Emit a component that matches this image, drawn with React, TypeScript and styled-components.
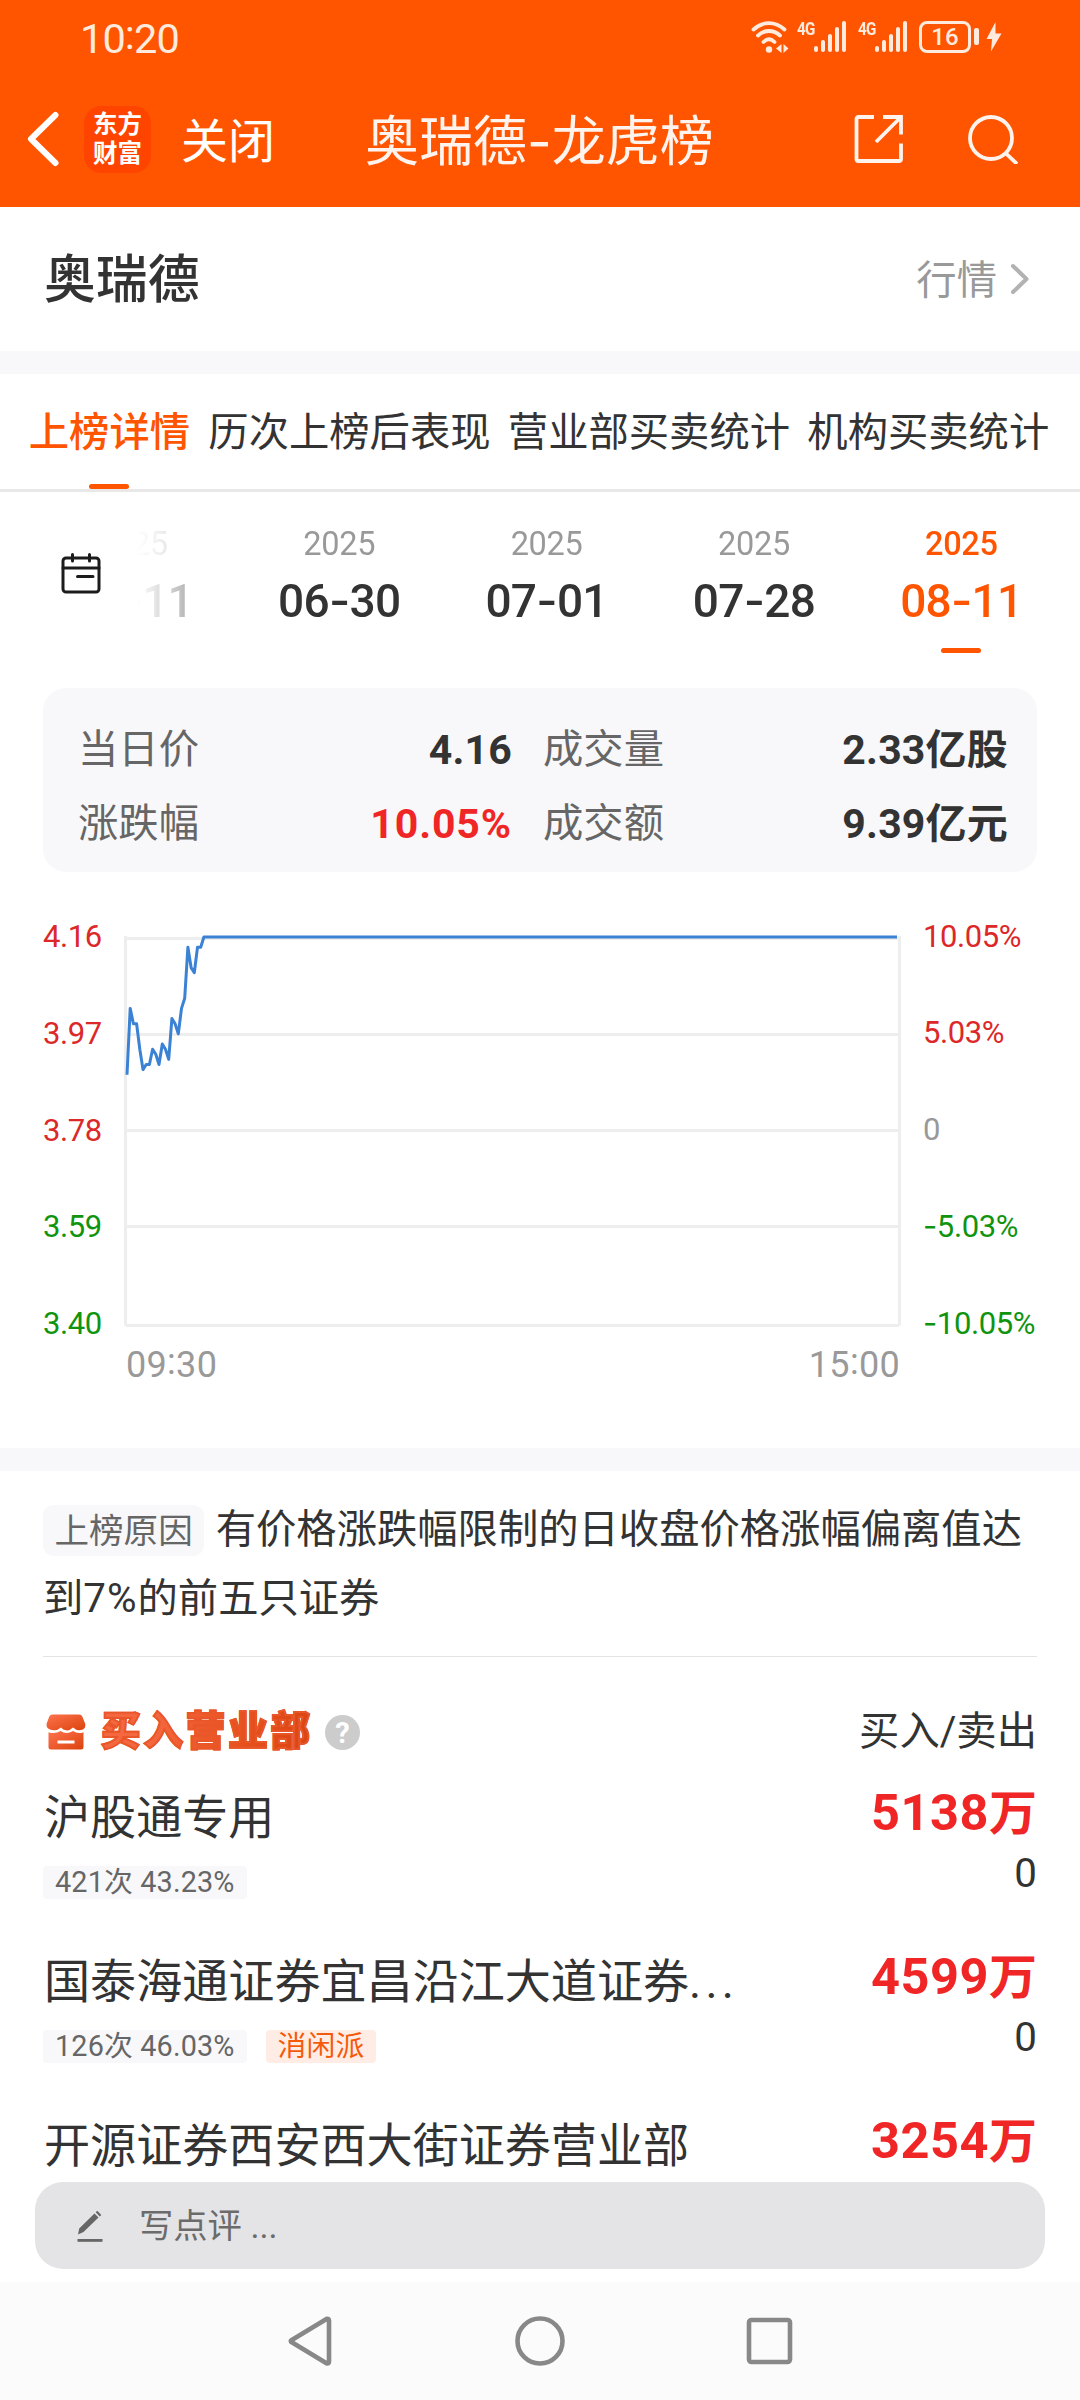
import React from 'react';
import styled, { createGlobalStyle, css } from 'styled-components';

const GlobalStyle = createGlobalStyle`
  * { box-sizing: border-box; }
  body {
    margin: 0;
    background: #fff;
    color: #333;
    font-family: Roboto, "Noto Sans CJK SC", sans-serif;
  }
`;

const Screen = styled.div`
  width: 1080px;
  height: 2400px;
  display: flex;
  flex-direction: column;
  overflow: hidden;
  background: #fff;
  white-space: nowrap;
`;

/* ---------- status bar + navigation header ---------- */

const Header = styled.header`
  height: 207px;
  flex: none;
  background: #ff5500;
  color: #fff;
`;

const StatusBar = styled.div`
  height: 76px;
  padding: 0 78px 0 80px;
  display: flex;
  align-items: center;
  justify-content: space-between;
  color: #ffeade;
`;

const Clock = styled.span`
  margin-top: -2px;
  font-size: 41.5px;
  line-height: 48px;
  letter-spacing: -0.9px;
`;

const Colon = styled.span`
  vertical-align: 0.09em;
`;

const StatusIcons = styled.div`
  display: flex;
  height: 32px;
  margin-top: -3px;
`;

const Signal = styled.div`
  display: flex;
  width: 61px;
`;

const NetLabel = styled.span`
  width: 17px;
  font-size: 19px;
  font-weight: 700;
  line-height: 15px;
  letter-spacing: -1px;
  transform: scaleX(0.8);
  transform-origin: 0 0;
`;

const Bars = styled.div`
  display: flex;
  align-items: flex-end;
  gap: 3px;
  height: 31px;
`;

const Bar = styled.i<{ $h: number }>`
  width: 4px;
  height: ${(p) => p.$h}px;
  border-radius: 2px;
  background: currentColor;
`;

const Battery = styled.div`
  width: 52px;
  height: 32px;
  border: 3px solid currentColor;
  border-radius: 8px;
  font-size: 24px;
  font-weight: 500;
  line-height: 27px;
  text-align: center;
`;

const BatteryTip = styled.i`
  width: 5px;
  height: 17px;
  margin: 7px 7px 0 3px;
  border-radius: 2px;
  background: currentColor;
`;

const NavRow = styled.div`
  height: 131px;
  display: flex;
  align-items: center;
  padding: 0 62px 5px 26px;
`;

const Logo = styled.div`
  width: 67px;
  height: 67px;
  margin: 1px 30px 0 25px;
  padding-top: 4px;
  border-radius: 17px;
  background: #ff4400;
  font-size: 24.5px;
  font-weight: 700;
  line-height: 29px;
  text-align: center;
`;

const CloseText = styled.span`
  width: 184px;
  margin-top: 5px;
  font-size: 47px;
  line-height: 60px;
`;

const Title = styled.h1`
  flex: 1;
  margin: 6px 0 0;
  font-size: 54px;
  font-weight: 400;
  line-height: 70px;
  color: #fff3ee;
`;

const Dash = styled.span`
  font-family: Inter, sans-serif;
`;

/* ---------- stock name ---------- */

const StockRow = styled.section`
  height: 144px;
  flex: none;
  padding: 3px 49px 0 44px;
  display: flex;
  align-items: center;
  justify-content: space-between;
`;

const StockName = styled.h2`
  margin: 0;
  font-size: 51.84px;
  font-weight: 500;
  line-height: 70px;
`;

const QuoteLink = styled.span`
  display: flex;
  align-items: center;
  gap: 13px;
  color: #999;
  font-size: 40.32px;
  line-height: 56px;

  svg { margin-top: -3px; }
`;

const Divider = styled.div`
  height: 23px;
  flex: none;
  background: #f8f8fa;
`;

/* ---------- tabs ---------- */

const Tabs = styled.nav`
  height: 118px;
  flex: none;
  display: flex;
  justify-content: center;
  gap: 17.3px;
  border-bottom: 3px solid #e8e8e8;
`;

const Tab = styled.span<{ $active?: boolean }>`
  display: flex;
  flex-direction: column;
  align-items: center;
  justify-content: space-between;
  padding-top: 31px;
  font-size: 40.32px;
  line-height: 56px;
  ${(p) => p.$active && css`
    margin-left: -2px;
    margin-right: 1px;
    color: #ff5500;
    font-weight: 500;
  `}
`;

const Underline = styled.i`
  width: 40px;
  height: 5px;
  border-radius: 3px;
  background: #ff5500;
`;

/* ---------- dates ---------- */

const DateStrip = styled.section`
  height: 196px;
  flex: none;
  display: flex;
`;

const CalendarBox = styled.div`
  width: 137px;
  flex: none;
  padding: 61px 0 0 61px;
`;

const DateScroller = styled.div`
  flex: 1;
  display: flex;
  justify-content: flex-end;
  overflow: hidden;
  padding-right: 15px;
  mask-image: linear-gradient(90deg, transparent 0, #000 142px);
`;

const DateItem = styled.div<{ $active?: boolean }>`
  width: 207.36px;
  flex: none;
  display: flex;
  flex-direction: column;
  align-items: center;
  padding-top: 32px;
  color: ${(p) => (p.$active ? '#ff5500' : '#333')};
`;

const Year = styled.span<{ $active?: boolean }>`
  font-size: 32.5px;
  line-height: 40px;
  letter-spacing: -0.3px;
  color: ${(p) => (p.$active ? '#ff5500' : '#999')};
  font-weight: ${(p) => (p.$active ? 500 : 400)};
`;

const Day = styled.span`
  margin: 8px 0 19px;
  font-size: 46px;
  font-weight: 500;
  line-height: 56px;
  letter-spacing: -0.7px;
`;

/* ---------- summary card ---------- */

const Card = styled.section`
  height: 184px;
  flex: none;
  margin: 0 43px;
  padding: 25px 29px 0 35px;
  display: grid;
  grid-template-columns: 434px 465px;
  column-gap: 31px;
  grid-auto-rows: 74px;
  border-radius: 23px;
  background: #f8f8fa;
`;

const Stat = styled.div`
  display: flex;
  align-items: center;
  justify-content: space-between;
  font-size: 40.32px;
  line-height: 56px;
  color: #666;
`;

const StatValue = styled.b<{ $up?: boolean }>`
  font-size: 41px;
  letter-spacing: ${(p) => (p.$up ? '0.9px' : '0.2px')};
  color: ${(p) => (p.$up ? '#f02626' : '#333')};
`;

/* ---------- chart ---------- */

const ChartArea = styled.section`
  height: 576px;
  flex: none;
  padding: 45px 43px 0;
`;

const ChartRow = styled.div`
  height: 427px;
  display: flex;
`;

type Tone = 'up' | 'down' | 'flat';
const toneColor: Record<Tone, string> = { up: '#dc2828', down: '#109410', flat: '#999' };

const Axis = styled.div<{ $w: number }>`
  width: ${(p) => p.$w}px;
  height: 427px;
  display: flex;
  flex-direction: column;
  justify-content: space-between;
`;

const AxisLabel = styled.span<{ $tone: Tone }>`
  font-size: 31px;
  line-height: 40px;
  letter-spacing: -0.4px;
  color: ${(p) => toneColor[p.$tone]};
`;

const Plot = styled.svg`
  display: block;
  margin: 18px 22px 0 -1px;
`;

const TimeAxis = styled.div`
  display: flex;
  justify-content: space-between;
  margin-top: -4px;
  padding: 0 137px 0 83px;
  font-size: 36px;
  line-height: 44px;
  letter-spacing: 0.3px;
  color: #999;
`;

/* ---------- reason ---------- */

const Reason = styled.section`
  height: 186px;
  flex: none;
  margin: 0 43px;
  padding-top: 24px;
  border-bottom: 1px solid #e4e4e4;
  font-size: 40.32px;
  line-height: 69.4px;
`;

const ReasonBadge = styled.span`
  display: inline-block;
  margin-right: 11.5px;
  padding: 1px 11.5px 0;
  border-radius: 11px;
  background: #f8f8fa;
  color: #666;
  font-size: 34.56px;
  line-height: 50px;
`;

const Spaced = styled.span`
  letter-spacing: 1px;
`;

/* ---------- brokers ---------- */

const Brokers = styled.section`
  flex: 1;
  min-height: 0;
  overflow: hidden;
  padding: 47px 43px 0;
`;

const BrokersHead = styled.div`
  height: 56px;
  display: flex;
  align-items: center;
  font-size: 40.32px;
  line-height: 56px;
`;

const BrokersTitle = styled.h3`
  margin: 0 12px 0 15px;
  font-size: 39.5px;
  font-weight: 900;
  line-height: 56px;
  letter-spacing: 2.9px;
  color: transparent;
  background: linear-gradient(100deg, #f4673f 25%, #e9531f 60%, #d84410);
  background-clip: text;
  -webkit-text-stroke: 1.8px #e9562a;
`;

const Help = styled.span`
  width: 35px;
  height: 35px;
  border-radius: 50%;
  background: #ccc;
  color: #fff;
  font-size: 29px;
  font-weight: 700;
  line-height: 36px;
  text-align: center;
`;

const HeadRight = styled.span`
  margin-left: auto;
`;

const BrokerRow = styled.div`
  height: 164.16px;
  padding-top: 23px;
  display: flex;
  justify-content: space-between;
`;

const BrokerName = styled.div`
  margin: 5px 0 0 1px;
  font-size: 46.08px;
  line-height: 60px;
`;

const Dots = styled.span`
  letter-spacing: 4.2px;
`;

const Tags = styled.div`
  display: flex;
  gap: 19px;
  margin-top: 18px;
`;

const Tag = styled.span<{ $hot?: boolean }>`
  height: 33px;
  padding: 0 12px;
  border-radius: 4px;
  font-size: 28.8px;
  line-height: 33px;
  letter-spacing: 0.15px;
  color: ${(p) => (p.$hot ? '#f55a0c' : '#666')};
  background: ${(p) => (p.$hot ? '#ffede5' : '#f8f8fa')};
`;

const Amounts = styled.div`
  text-align: right;
`;

const Buy = styled.div`
  font-size: 50.5px;
  font-weight: 700;
  line-height: 60px;
  letter-spacing: 0.5px;
  color: #f02626;
`;

const Unit = styled.span`
  font-size: 48px;
  letter-spacing: 0;
`;

const Sell = styled.div`
  font-size: 40.32px;
  line-height: 60px;
`;

/* ---------- bottom ---------- */

const CommentDock = styled.div`
  height: 100px;
  flex: none;
  padding: 0 35px;
  background: #fff;
`;

const CommentBox = styled.div`
  height: 87px;
  padding: 0 42px;
  display: flex;
  align-items: center;
  gap: 36px;
  border-radius: 28px;
  background: #e4e4e6;
  color: #6b6b6b;
  font-size: 34.3px;
  line-height: 50px;
`;

const SystemNav = styled.footer`
  height: 118px;
  flex: none;
  display: flex;
  justify-content: center;
  align-items: center;
  gap: 180px;
  background: #fbfbfb;
`;

/* ---------- data ---------- */

const prices = [
  3.89, 4.02, 3.99, 3.99, 3.94, 3.9, 3.91, 3.91, 3.94, 3.93, 3.91, 3.95, 3.94,
  3.92, 4.0, 3.99, 3.97, 4.02, 4.04, 4.14, 4.1, 4.09, 4.14, 4.14, 4.16,
];
const linePoints =
  prices.map((p, i) => `${(3 + i * 3.205).toFixed(1)},${(2 + (4.16 - p) * 510).toFixed(1)}`).join(' ') +
  ' 773,2';

const leftAxis: [string, Tone][] = [
  ['4.16', 'up'], ['3.97', 'up'], ['3.78', 'up'], ['3.59', 'down'], ['3.40', 'down'],
];
const rightAxis: [string, Tone][] = [
  ['10.05%', 'up'], ['5.03%', 'up'], ['0', 'flat'], ['-5.03%', 'down'], ['-10.05%', 'down'],
];
const dates = ['06-11', '06-30', '07-01', '07-28', '08-11'];
const brokers = [
  { name: '沪股通专用', cut: false, stat: '421次 43.23%', style: '', buy: '5138', sell: '0' },
  { name: '国泰海通证券宜昌沿江大道证券', cut: true, stat: '126次 46.03%', style: '消闲派', buy: '4599', sell: '0' },
  { name: '开源证券西安西大街证券营业部', cut: false, stat: '', style: '', buy: '3254', sell: '' },
];

function WithDash({ text }: { text: string }) {
  const [a, b] = text.split('-');
  return b === undefined ? <>{a}</> : <>{a}<Dash>-</Dash>{b}</>;
}

function SignalIcon() {
  return (
    <Signal>
      <NetLabel>4G</NetLabel>
      <Bars>{[6, 12, 18, 25, 31].map((h) => <Bar key={h} $h={h} />)}</Bars>
    </Signal>
  );
}

export default function App() {
  return (
    <>
      <GlobalStyle />
      <Screen>
        <Header>
          <StatusBar>
            <Clock>10<Colon>:</Colon>20</Clock>
            <StatusIcons>
              <svg width="46" height="32" viewBox="0 0 46 32" fill="none" stroke="currentColor" strokeWidth="3.8" strokeLinecap="round">
                <path d="M2.5 8.5C12 0 24 0 33.500 8.500M7 14.500c6.500-6 15.500-6 22 0M12.500 21c3.500-3.500 7.500-3.500 11 0" />
                <circle cx="18" cy="28.500" r="3.200" fill="currentColor" stroke="none" />
                <path d="M30.500 23v9l-5.500-4.500zM32.500 23v9l5-4.500z" fill="currentColor" stroke="none" />
              </svg>
              <SignalIcon />
              <SignalIcon />
              <Battery>16</Battery>
              <BatteryTip />
              <svg width="16" height="31" viewBox="0 0 16 31" fill="currentColor">
                <path d="M9.500 1L0.500 18h5.500L5 30.500 15.500 12.500H9.500z" />
              </svg>
            </StatusIcons>
          </StatusBar>
          <NavRow>
            <svg width="33" height="56" viewBox="0 0 33 56" fill="none" stroke="#fff" strokeWidth="6" strokeLinecap="round" strokeLinejoin="round">
              <path d="M29.500 4L5 28l24.500 24" />
            </svg>
            <Logo>东方<br />财富</Logo>
            <CloseText>关闭</CloseText>
            <Title>奥瑞德<Dash>-</Dash>龙虎榜</Title>
            <svg width="164" height="50" viewBox="0 0 164 50" fill="none" stroke="#fff3ee" strokeWidth="3.8">
              <path d="M20 3H4.500Q2.500 3 2.500 5V45Q2.500 47 4.500 47H45Q47 47 47 45V29.500M29 3H47V20.500M46 4L22 28" />
              <circle cx="137" cy="24" r="21" />
              <path d="M151.500 39L163 50" />
            </svg>
          </NavRow>
        </Header>

        <StockRow>
          <StockName>奥瑞德</StockName>
          <QuoteLink>
            行情
            <svg width="21" height="34" viewBox="0 0 21 34" fill="none" stroke="#b2b2b2" strokeWidth="4" strokeLinecap="round" strokeLinejoin="round">
              <path d="M3 4l13.500 13L3 30" />
            </svg>
          </QuoteLink>
        </StockRow>
        <Divider />

        <Tabs>
          <Tab $active>上榜详情<Underline /></Tab>
          <Tab>历次上榜后表现</Tab>
          <Tab>营业部买卖统计</Tab>
          <Tab>机构买卖统计</Tab>
        </Tabs>

        <DateStrip>
          <CalendarBox>
            <svg width="40" height="41" viewBox="0 0 40 41" fill="none" stroke="#1c1c1c" strokeWidth="3" strokeLinecap="round">
              <rect x="2" y="5" width="36" height="34" rx="3" />
              <path d="M2 15H38M11.500 1.500V8M28.500 1.500V8M16.500 23.500H32" />
            </svg>
          </CalendarBox>
          <DateScroller>
            {dates.map((d) => {
              const active = d === '08-11';
              return (
                <DateItem key={d} $active={active}>
                  <Year $active={active}>2025</Year>
                  <Day><WithDash text={d} /></Day>
                  {active && <Underline />}
                </DateItem>
              );
            })}
          </DateScroller>
        </DateStrip>

        <Card>
          <Stat>当日价<StatValue>4.16</StatValue></Stat>
          <Stat>成交量<StatValue>2.33亿股</StatValue></Stat>
          <Stat>涨跌幅<StatValue $up>10.05%</StatValue></Stat>
          <Stat>成交额<StatValue>9.39亿元</StatValue></Stat>
        </Card>

        <ChartArea>
          <ChartRow>
            <Axis $w={82}>
              {leftAxis.map(([t, tone]) => <AxisLabel key={t} $tone={tone}>{t}</AxisLabel>)}
            </Axis>
            <Plot width="777" height="393" viewBox="0 0 777 393" fill="none">
              <path d="M1.500 3.500H775M1.500 99.500H775M1.500 195.500H775M1.500 291.500H775M1.500 390.500H775M1.500 1V390.500M775.500 1V390.500" stroke="#eee" strokeWidth="3" />
              <polyline points={linePoints} stroke="#3c82d4" strokeWidth="3" strokeLinejoin="round" />
            </Plot>
            <Axis $w={114}>
              {rightAxis.map(([t, tone]) => <AxisLabel key={t} $tone={tone}><WithDash text={t} /></AxisLabel>)}
            </Axis>
          </ChartRow>
          <TimeAxis>
            <span>09<Colon>:</Colon>30</span>
            <span>15<Colon>:</Colon>00</span>
          </TimeAxis>
        </ChartArea>
        <Divider />

        <Reason>
          <ReasonBadge>上榜原因</ReasonBadge>有价格涨跌幅限制的日收盘价格涨幅偏离值达<br />
          到<Spaced>7%</Spaced>的前五只证券
        </Reason>

        <Brokers>
          <BrokersHead>
            <svg width="43" height="36" viewBox="0 0 43 36">
              <defs>
                <linearGradient id="shop" x1="0" y1="0" x2="1" y2="1">
                  <stop offset="0.1" stopColor="#fa6e48" />
                  <stop offset="1" stopColor="#dc430c" />
                </linearGradient>
              </defs>
              <path fill="url(#shop)" d="M9.500 0.500H36Q38.500 0.500 39.300 2.500L42.300 10Q43 16 36.500 16.300Q33 16.300 30 13.500Q26.500 17 23 16.300Q20 16 18 13.500Q14.500 16.500 11 16.300Q3 16 3.500 10L6.300 2.500Q7.300 0.500 9.500 0.500Z" />
              <path fill="url(#shop)" fillRule="evenodd" d="M5.500 18.200Q12 20.500 17.500 17Q23.500 21 30 17Q35 20.500 40.500 18.200V33Q40.500 35.500 38 35.500H8Q5.500 35.500 5.500 33ZM14.500 26.500V29.500H31.500V26.500Z" />
            </svg>
            <BrokersTitle>买入营业部</BrokersTitle>
            <Help>?</Help>
            <HeadRight>买入/卖出</HeadRight>
          </BrokersHead>
          {brokers.map((b) => (
            <BrokerRow key={b.name}>
              <div>
                <BrokerName>{b.name}{b.cut && <Dots>...</Dots>}</BrokerName>
                {b.stat && (
                  <Tags>
                    <Tag>{b.stat}</Tag>
                    {b.style && <Tag $hot>{b.style}</Tag>}
                  </Tags>
                )}
              </div>
              <Amounts>
                <Buy>{b.buy}<Unit>万</Unit></Buy>
                {b.sell && <Sell>{b.sell}</Sell>}
              </Amounts>
            </BrokerRow>
          ))}
        </Brokers>

        <CommentDock>
          <CommentBox>
            <svg width="26" height="32" viewBox="0 0 26 32" fill="#666">
              <path d="M1 24.500L2.200 18.500 17.500 3.500 21.500 7.500 6.500 22Z M18.700 2.300L20.300 0.800 24.300 5 22.700 6.400Z" />
              <rect x="0.500" y="29" width="25" height="2.800" />
            </svg>
            写点评 ...
          </CommentBox>
        </CommentDock>

        <SystemNav>
          <svg width="48" height="52" viewBox="0 0 48 52" fill="none" stroke="#888" strokeWidth="4.600" strokeLinejoin="round">
            <path d="M5 25.500Q4.500 26 5 26.800L40.500 48.300Q43 49 43 46.500V5.500Q43 3 40.500 4Z" />
          </svg>
          <svg width="52" height="52" viewBox="0 0 52 52" fill="none" stroke="#888" strokeWidth="4.600">
            <circle cx="26" cy="26" r="22.500" />
          </svg>
          <svg width="48" height="50" viewBox="0 0 48 50" fill="none" stroke="#888" strokeWidth="4.600">
            <rect x="3" y="4" width="41" height="42" rx="2.500" />
          </svg>
        </SystemNav>
      </Screen>
    </>
  );
}
